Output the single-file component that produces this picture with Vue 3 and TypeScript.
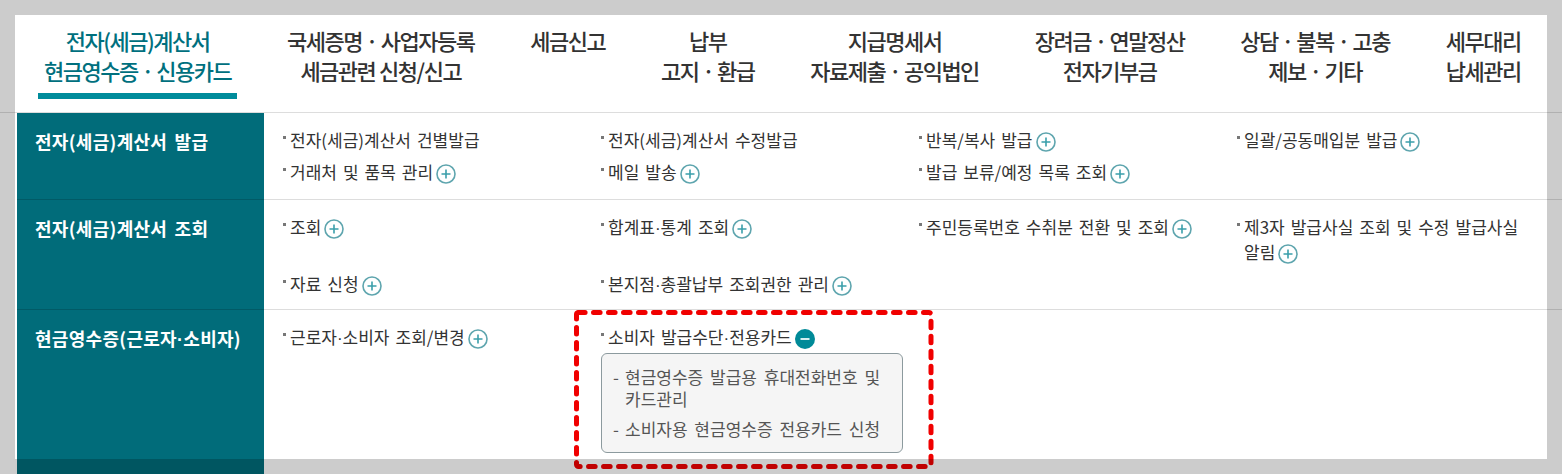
<script setup lang="ts">
interface Item { text: string; state?: 'plus' | 'minus'; subs?: string[] }
interface Row { title: string; items: Item[]; cls: string }
const tabs: { lines: string[]; active?: boolean }[] = [
  { lines: ['전자(세금)계산서', '현금영수증 · 신용카드'], active: true },
  { lines: ['국세증명 · 사업자등록', '세금관련 신청/신고'] },
  { lines: ['세금신고'] },
  { lines: ['납부', '고지 · 환급'] },
  { lines: ['지급명세서', '자료제출 · 공익법인'] },
  { lines: ['장려금 · 연말정산', '전자기부금'] },
  { lines: ['상담 · 불복 · 고충', '제보 · 기타'] },
  { lines: ['세무대리', '납세관리'] },
]
const rows: Row[] = [
  {
    title: '전자(세금)계산서 발급', cls: 'r1',
    items: [
      { text: '전자(세금)계산서 건별발급' },
      { text: '전자(세금)계산서 수정발급' },
      { text: '반복/복사 발급', state: 'plus' },
      { text: '일괄/공동매입분 발급', state: 'plus' },
      { text: '거래처 및 품목 관리', state: 'plus' },
      { text: '메일 발송', state: 'plus' },
      { text: '발급 보류/예정 목록 조회', state: 'plus' },
    ],
  },
  {
    title: '전자(세금)계산서 조회', cls: 'r2',
    items: [
      { text: '조회', state: 'plus' },
      { text: '합계표·통계 조회', state: 'plus' },
      { text: '주민등록번호 수취분 전환 및 조회', state: 'plus' },
      { text: '제3자 발급사실 조회 및 수정 발급사실 알림', state: 'plus' },
      { text: '자료 신청', state: 'plus' },
      { text: '본지점·총괄납부 조회권한 관리', state: 'plus' },
    ],
  },
  {
    title: '현금영수증(근로자·소비자)', cls: 'r3',
    items: [
      { text: '근로자·소비자 조회/변경', state: 'plus' },
      {
        text: '소비자 발급수단·전용카드', state: 'minus',
        subs: ['현금영수증 발급용 휴대전화번호 및 카드관리', '소비자용 현금영수증 전용카드 신청'],
      },
    ],
  },
]
const parts = (s: string): string[] => s.split('·')
</script>

<template>
  <div class="page">
    <nav class="tabs">
      <div v-for="t in tabs" :key="t.lines[0]" class="tab" :class="{ active: t.active }">
        <span class="tab-label">
          <span v-for="l in t.lines" :key="l" class="tab-line">{{ l }}</span>
        </span>
      </div>
    </nav>
    <section class="table">
      <div v-for="r in rows" :key="r.title" class="row" :class="r.cls">
        <h3 class="side">
          <template v-for="(p, i) in parts(r.title)" :key="p"><span v-if="i" class="dot">·</span>{{ p }}</template>
        </h3>
        <ul class="grid">
          <li v-for="it in r.items" :key="it.text" class="item">
            <span class="bullet"></span>
            <div class="body">
              <span class="label">
                <template v-for="(p, i) in parts(it.text)" :key="p"><span v-if="i" class="dot">·</span>{{ p }}</template>
              </span>
              <svg v-if="it.state === 'plus'" class="ico" width="20" height="20" viewBox="0 0 20 20">
                <circle cx="10" cy="10" r="9" fill="#fff" stroke="#5ea5ae" stroke-width="1.6" />
                <path d="M10 5.5v9M5.5 10h9" stroke="#3a9fab" stroke-width="1.6" fill="none" />
              </svg>
              <svg v-if="it.state === 'minus'" class="ico" width="20" height="20" viewBox="0 0 20 20">
                <circle cx="10" cy="10" r="10" fill="#008a98" />
                <path d="M5.5 10h9" stroke="#d5eef0" stroke-width="2" fill="none" />
              </svg>
              <ul v-if="it.subs" class="subs">
                <li v-for="s in it.subs" :key="s" class="sub">{{ s }}</li>
              </ul>
            </div>
          </li>
        </ul>
      </div>
    </section>
    <svg class="dash" width="362" height="162" viewBox="0 0 362 162">
      <rect x="3.5" y="3.5" width="354.5" height="154" rx="2" fill="none" stroke="#f00000" stroke-width="5" stroke-linecap="round" stroke-dasharray="6.6 8.4" />
    </svg>
    <div class="frame"></div>
  </div>
</template>

<style>
html, body { margin: 0; overflow: hidden; background: #fff; }
</style>

<style scoped>
.page {
  position: relative;
  width: 1562px;
  height: 474px;
  overflow: hidden;
  background: #fff;
  font-family: "Noto Sans CJK KR", "Noto Sans", sans-serif;
  color: #333;
}
.tabs {
  display: flex;
  height: 112px;
  box-sizing: content-box;
  padding-left: 16.15px;
  border-bottom: 1px solid #ddd;
}
.tab {
  padding: 25px 27.9px 0;
  text-align: center;
  font-size: 22px;
  font-weight: 500;
  line-height: 30px;
  letter-spacing: -1.5px;
  word-spacing: 0.3px;
  color: #333;
  white-space: nowrap;
}
.tab-label { display: block; }
.tab-line { display: block; }
.active { color: #00707e; }
.active .tab-label {
  margin: 0 -6px;
  padding: 0 6px 8px;
  border-bottom: 6px solid #008c9b;
}
.table { margin-left: 17px; }
.row {
  display: flex;
  border-bottom: 1px solid #ddd;
}
.r1 { height: 86px; }
.r2 { height: 109px; }
.r3 { height: 200px; }
.side {
  flex: 0 0 247px;
  margin: 0 0 -1px;
  padding: 15px 0 0 18px;
  box-sizing: border-box;
  background: #016c7a;
  border-bottom: 1px solid #015a66;
  color: #fff;
  font-size: 18px;
  font-weight: 700;
  line-height: 26px;
  letter-spacing: 0.3px;
  word-spacing: 3px;
}
.dot {
  font-family: "Liberation Sans", sans-serif;
}
.grid {
  list-style: none;
  margin: 0;
  padding: 14px 0 0 19px;
  display: grid;
  grid-template-columns: repeat(4, 318px);
  align-content: start;
  flex: 1;
}
.item {
  display: flex;
  padding: 0 24px 7px 0;
  box-sizing: border-box;
}
.bullet {
  flex: 0 0 3px;
  height: 3px;
  margin: 9px 4px 0 0;
  background: #777;
}
.body {
  font-size: 17px;
  line-height: 25px;
  word-spacing: 2.2px;
  flex: 1;
  min-width: 0;
}
.ico {
  display: inline-block;
  vertical-align: -5px;
  margin-left: 3px;
}
.subs {
  list-style: none;
  margin: 2px 0 0 -7px;
  padding: 12px 20px 12px 11px;
  width: 302px;
  box-sizing: border-box;
  background: #f5f5f5;
  border: 1px solid #8c9a9e;
  border-radius: 6px;
}
.sub {
  position: relative;
  padding-left: 12px;
  line-height: 22px;
  margin-bottom: 8px;
  word-spacing: 3px;
  color: #555;
}
.sub:last-child { margin-bottom: 0; }
.sub::before {
  content: "-";
  position: absolute;
  left: 0;
  top: 0;
}
.dash {
  position: absolute;
  left: 573px;
  top: 309px;
}
.frame {
  position: absolute;
  inset: 0;
  box-sizing: border-box;
  border: 15px solid rgba(0, 0, 0, 0.2);
  pointer-events: none;
}
</style>
